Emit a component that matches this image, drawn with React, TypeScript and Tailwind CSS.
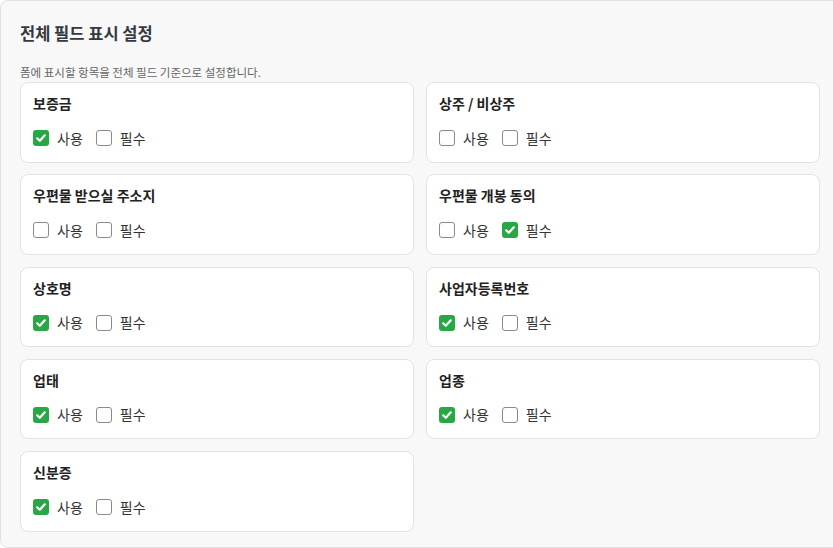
import React from "react";

type Field = { name: string; use: boolean; req: boolean };

const fields: Field[] = [
  { name: "보증금", use: true, req: false },
  { name: "상주 / 비상주", use: false, req: false },
  { name: "우편물 받으실 주소지", use: false, req: false },
  { name: "우편물 개봉 동의", use: false, req: true },
  { name: "상호명", use: true, req: false },
  { name: "사업자등록번호", use: true, req: false },
  { name: "업태", use: true, req: false },
  { name: "업종", use: true, req: false },
  { name: "신분증", use: true, req: false },
];

function Box({ checked }: { checked: boolean }) {
  if (checked) {
    return (
      <span className="w-[16px] h-[16px] rounded-[3px] bg-[#28a745] flex items-center justify-center shrink-0">
        <svg width="12" height="12" viewBox="0 0 12 12">
          <path d="M2.2 6.3 L4.8 8.8 L9.8 3.3" fill="none" stroke="white" strokeWidth="2.2" strokeLinecap="round" strokeLinejoin="round" />
        </svg>
      </span>
    );
  }
  return <span className="block w-[16px] h-[16px] rounded-[3px] border border-[#8a8a8a] bg-white shrink-0" />;
}

function Card({ f }: { f: Field }) {
  return (
    <div className="h-[80.5px] bg-white border border-[#e3e3e3] rounded-[8px] pl-[12px] pt-[10px]">
      <div className="text-[14px] leading-[20px] font-bold text-[#222]">{f.name}</div>
      <div className="mt-[15px] flex items-center h-[20px] text-[14px] text-[#333]">
        <Box checked={f.use} />
        <span className="ml-[8px]">사용</span>
        <span className="ml-[13px] flex"><Box checked={f.req} /></span>
        <span className="ml-[8px]">필수</span>
      </div>
    </div>
  );
}

export default function App() {
  return (
    <div
      className="w-[833px] h-[548px] overflow-hidden bg-white"
      style={{ fontFamily: '"Noto Sans CJK KR", "Noto Sans", sans-serif' }}
    >
      <div className="w-[845px] h-[548px] bg-[#f8f8f8] border border-[#e2e2e2] rounded-[8px] pt-[20px] pl-[19px]">
        <div className="text-[16.5px] leading-[24px] font-bold text-[#343a40]">전체 필드 표시 설정</div>
        <div className="mt-[19px] text-[11.5px] leading-[16px] text-[#666]">폼에 표시할 항목을 전체 필드 기준으로 설정합니다.</div>
        <div className="mt-[2px] grid grid-cols-[394px_394px] gap-x-[12px] gap-y-[11.75px]">
          {fields.map((f) => (
            <Card key={f.name} f={f} />
          ))}
        </div>
      </div>
    </div>
  );
}
